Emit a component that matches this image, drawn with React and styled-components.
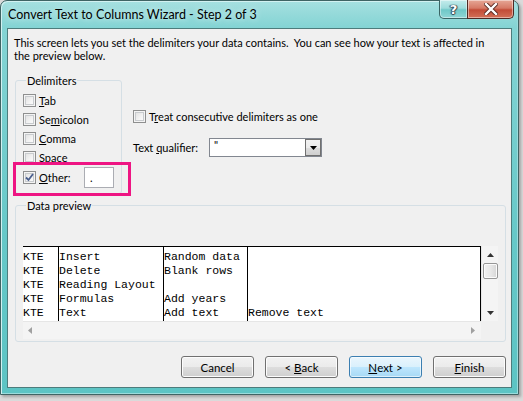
import React from 'react'
import styled, { createGlobalStyle } from 'styled-components'

const GlobalStyle = createGlobalStyle`
  html, body {
    margin: 0;
    padding: 0;
    background: #dadada;
  }
  body {
    width: 523px;
    height: 401px;
    overflow: hidden;
    font-family: Lato, "Liberation Sans", Arial, sans-serif;
    color: #000;
  }
`

const Window = styled.div`
  width: 519px;
  height: 395px;
  box-sizing: border-box;
  border: 1px solid #3f6464;
  border-radius: 7px 7px 0 0;
  padding: 0 6px 6px 6px;
  display: flex;
  flex-direction: column;
  background: linear-gradient(to bottom, #a6e0e0 0px, #84d4d4 26px, #66c8c8 60%, #5cc4c4 100%);
  box-shadow: inset 1px 1px 0 #d2f1f1, inset -1px -1px 0 #9adcdc, 2px 2px 3px rgba(0, 0, 0, 0.25);
`

const TitleBar = styled.div`
  height: 27px;
  display: flex;
  align-items: flex-start;
  justify-content: space-between;
`

const Title = styled.div`
  margin-left: 1px;
  padding-top: 6px;
  font-size: 12.5px;
  line-height: 16px;
  color: #000;
  text-shadow: 0 0 6px rgba(255, 255, 255, 0.8);
`

const CaptionButtons = styled.div`
  display: flex;
  margin-top: -1px;
  margin-right: -2px;
`

const CaptionButton = styled.div`
  width: ${p => p.$w}px;
  height: 19px;
  box-sizing: border-box;
  border: 1px solid ${p => (p.$close ? '#4e2a24' : '#3a6464')};
  border-top: none;
  border-radius: ${p => (p.$close ? '0 0 5px 0' : '0 0 0 5px')};
  margin-left: ${p => (p.$close ? '-1px' : '0')};
  display: flex;
  align-items: center;
  justify-content: center;
  background: ${p =>
    p.$close
      ? 'linear-gradient(to bottom, #e6a796 0%, #d67a66 45%, #c24c37 55%, #d27057 100%)'
      : 'linear-gradient(to bottom, #c4ecec 0%, #9edcdc 45%, #6fc8c8 55%, #8fd6d6 100%)'};
  box-shadow: inset 0 0 0 1px rgba(255, 255, 255, 0.45);
`

const HelpGlyph = styled.span`
  font-family: "DejaVu Sans", sans-serif;
  font-weight: bold;
  font-size: 13px;
  line-height: 13px;
  color: #fff;
  text-shadow: 0 0 1px #234, 1px 0 1px #345, -1px 0 1px #345, 0 1px 1px #345;
`

const Client = styled.div`
  flex: 1;
  border: 1px solid #4d7c7c;
  background: #f0f0f0;
  display: flex;
  flex-direction: column;
  padding: 7px 5px 0 6px;
  font-size: 11px;
  line-height: 13px;
`

const Intro = styled.p`
  margin: 0;
  width: 484px;
`

const U = styled.span`
  text-decoration: underline;
  text-underline-offset: 1px;
`

const OptionsRow = styled.div`
  position: relative;
  display: flex;
  margin-top: 12px;
  margin-left: 1px;
`

const Group = styled.fieldset`
  margin: 0;
  box-sizing: border-box;
  width: ${p => p.$w}px;
  border: 1px solid #d5dfe5;
  border-radius: 3px;
  padding: ${p => p.$pad};
  min-width: 0;
`

const Legend = styled.legend`
  margin-left: 3px;
  padding: 0 1px;
  font-size: 11px;
  line-height: 13px;
`

const CheckRow = styled.label`
  display: flex;
  align-items: center;
  height: ${p => p.$h || 19}px;
  gap: 3px;
`

const Box = styled.span`
  width: 13px;
  height: 13px;
  box-sizing: border-box;
  border: 1px solid #8e8f8f;
  background: linear-gradient(135deg, #dcdcdc 0%, #f4f4f4 60%, #ffffff 100%);
  box-shadow: inset 0 0 0 1px #f4f4f4, inset 0 0 0 2px #c8cbce;
  display: flex;
  align-items: center;
  justify-content: center;
  flex: none;
`

const OtherLabel = styled.span`
  width: 42px;
`

const TextBox = styled.div`
  width: 30px;
  height: 21px;
  box-sizing: border-box;
  border: 1px solid #abadb3;
  background: #fff;
  padding: 3px 0 0 5px;
  font-size: 11px;
`

const Pink = styled.div`
  position: absolute;
  left: -2px;
  top: 88px;
  width: 118px;
  height: 34px;
  box-sizing: border-box;
  border: 3px solid #ee1583;
  pointer-events: none;
`

const RightCol = styled.div`
  display: flex;
  flex-direction: column;
  padding: 36px 0 0 11px;
`

const QualifierRow = styled.div`
  display: flex;
  align-items: center;
  margin-top: 15px;
`

const QualLabel = styled.span`
  width: 76px;
`

const Combo = styled.div`
  width: 113px;
  height: 19px;
  box-sizing: border-box;
  border: 1px solid #828790;
  background: #fff;
  display: flex;
  justify-content: space-between;
`

const ComboValue = styled.span`
  padding: 0 0 0 4px;
  font-size: 11px;
  line-height: 11px;
`

const ComboButton = styled.span`
  width: 16px;
  height: 17px;
  box-sizing: border-box;
  border: 1px solid #707070;
  background: linear-gradient(to bottom, #f2f2f2 0%, #ebebeb 50%, #dddddd 51%, #cfcfcf 100%);
  display: flex;
  align-items: center;
  justify-content: center;
`

const PreviewGroup = styled(Group)`
  margin-top: 5px;
  margin-left: 1px;
`

const PreviewGrid = styled.div`
  display: grid;
  grid-template-columns: 458px 17px;
  grid-template-rows: 75px 18px;
`

const Table = styled.div`
  display: flex;
  background: #fff;
  border-top: 1px solid #000;
  overflow: hidden;
  font-family: "Liberation Mono", "Courier New", monospace;
  font-size: 11.5px;
  line-height: 14px;
  white-space: pre;
`

const Col = styled.div`
  box-sizing: border-box;
  width: ${p => (p.$w ? `${p.$w}px` : 'auto')};
  flex: ${p => (p.$w ? 'none' : '1')};
  border-right: 1px solid #000;
  padding-top: 3px;
`

const Line = styled.div`
  height: 14px;
`

const ScrollV = styled.div`
  background: #f4f4f4;
  border-left: 1px solid #e6e6e6;
  display: flex;
  flex-direction: column;
  align-items: center;
`

const ScrollH = styled.div`
  background: #f4f4f4;
  border-top: 1px solid #e6e6e6;
  display: flex;
  align-items: center;
  justify-content: space-between;
  padding: 0 6px 0 5px;
`

const Corner = styled.div`
  background: #f0f0f0;
`

const Thumb = styled.div`
  width: 15px;
  height: 16px;
  box-sizing: border-box;
  border: 1px solid #979797;
  border-radius: 2px;
  background: linear-gradient(to right, #f3f3f3 0%, #e8e8e8 50%, #d6d6d6 100%);
  box-shadow: inset 0 0 0 1px #fbfbfb;
`

const ArrowSlot = styled.div`
  height: 17px;
  display: flex;
  align-items: center;
  justify-content: center;
`

const Spacer = styled.div`
  flex: 1;
`

const ButtonRow = styled.div`
  display: flex;
  justify-content: flex-end;
  gap: 11px;
  margin-top: 14px;
`

const Button = styled.div`
  width: 73px;
  height: 22px;
  box-sizing: border-box;
  border: 1px solid ${p => (p.$default ? '#3c7fb1' : '#707070')};
  border-radius: 3px;
  background: ${p =>
    p.$default
      ? 'linear-gradient(to bottom, #eaf6fd 0%, #d9f0fc 50%, #bee6fd 51%, #a7d9f5 100%)'
      : 'linear-gradient(to bottom, #f2f2f2 0%, #ebebeb 50%, #dddddd 51%, #cfcfcf 100%)'};
  box-shadow: inset 0 0 0 1px ${p => (p.$default ? 'rgba(255,255,255,0.6)' : '#fcfcfc')};
  display: flex;
  align-items: center;
  justify-content: center;
  font-size: 11.5px;
  white-space: pre;
`

const Check = ({ on }) => (
  <Box>
    {on && (
      <svg width="9" height="9" viewBox="0 0 9 9">
        <path d="M1 4.5 L3.5 7 L8 1" fill="none" stroke="#4a5f8e" strokeWidth="1.8" />
      </svg>
    )}
  </Box>
)

const Tri = ({ dir, color = '#000' }) => {
  const d = {
    up: 'M0 4 L3.5 0 L7 4 Z',
    down: 'M0 0 L7 0 L3.5 4 Z',
    left: 'M4 0 L4 7 L0 3.5 Z',
    right: 'M0 0 L4 3.5 L0 7 Z',
  }[dir]
  const w = dir === 'up' || dir === 'down' ? 7 : 4
  const h = dir === 'up' || dir === 'down' ? 4 : 7
  return (
    <svg width={w} height={h} viewBox={`0 0 ${w} ${h}`}>
      <path d={d} fill={color} />
    </svg>
  )
}

const columns = [
  { w: 36, rows: ['KTE', 'KTE', 'KTE', 'KTE', 'KTE'] },
  { w: 105, rows: ['Insert', 'Delete', 'Reading Layout', 'Formulas', 'Text'] },
  { w: 84, rows: ['Random data', 'Blank rows', '', 'Add years', 'Add text'] },
  { rows: ['', '', '', '', 'Remove text'] },
]

export default function App() {
  return (
    <>
      <GlobalStyle />
      <Window>
        <TitleBar>
          <Title>Convert Text to Columns Wizard - Step 2 of 3</Title>
          <CaptionButtons>
            <CaptionButton $w={29}>
              <HelpGlyph>?</HelpGlyph>
            </CaptionButton>
            <CaptionButton $w={47} $close>
              <svg width="14" height="12" viewBox="0 0 14 12">
                <path d="M2 1 L12 11 M12 1 L2 11" stroke="#5a2a22" strokeWidth="4.2" strokeLinecap="square" />
                <path d="M2 1 L12 11 M12 1 L2 11" stroke="#fff" strokeWidth="2.4" strokeLinecap="square" />
              </svg>
            </CaptionButton>
          </CaptionButtons>
        </TitleBar>
        <Client>
          <Intro>
            This screen lets you set the delimiters your data contains.&nbsp; You can see how your text is affected in
            the preview below.
          </Intro>
          <OptionsRow>
            <Group $w={107} $pad="4px 0 5px 7px">
              <Legend>Delimiters</Legend>
              <CheckRow>
                <Check />
                <span><U>T</U>ab</span>
              </CheckRow>
              <CheckRow>
                <Check />
                <span>Se<U>m</U>icolon</span>
              </CheckRow>
              <CheckRow>
                <Check />
                <span><U>C</U>omma</span>
              </CheckRow>
              <CheckRow>
                <Check />
                <span><U>S</U>pace</span>
              </CheckRow>
              <CheckRow $h={21}>
                <Check on />
                <OtherLabel><U>O</U>ther:</OtherLabel>
                <TextBox>.</TextBox>
              </CheckRow>
            </Group>
            <RightCol>
              <CheckRow $h={13}>
                <Check />
                <span>T<U>r</U>eat consecutive delimiters as one</span>
              </CheckRow>
              <QualifierRow>
                <QualLabel>Text <U>q</U>ualifier:</QualLabel>
                <Combo>
                  <ComboValue>"</ComboValue>
                  <ComboButton>
                    <Tri dir="down" />
                  </ComboButton>
                </Combo>
              </QualifierRow>
            </RightCol>
            <Pink />
          </OptionsRow>
          <PreviewGroup $w={491} $pad="34px 6px 2px 7px">
            <Legend>Data preview</Legend>
            <PreviewGrid>
              <Table>
                {columns.map((c, i) => (
                  <Col key={i} $w={c.w}>
                    {c.rows.map((r, j) => (
                      <Line key={j}>{r}</Line>
                    ))}
                  </Col>
                ))}
              </Table>
              <ScrollV>
                <ArrowSlot>
                  <Tri dir="up" color="#333" />
                </ArrowSlot>
                <Thumb />
                <Spacer />
                <ArrowSlot>
                  <Tri dir="down" color="#333" />
                </ArrowSlot>
              </ScrollV>
              <ScrollH>
                <Tri dir="left" color="#a0a0a0" />
                <Tri dir="right" color="#a0a0a0" />
              </ScrollH>
              <Corner />
            </PreviewGrid>
          </PreviewGroup>
          <ButtonRow>
            <Button>Cancel</Button>
            <Button>{'< '}<U>B</U>ack</Button>
            <Button $default><U>N</U>ext{' >'}</Button>
            <Button><U>F</U>inish</Button>
          </ButtonRow>
        </Client>
      </Window>
    </>
  )
}
